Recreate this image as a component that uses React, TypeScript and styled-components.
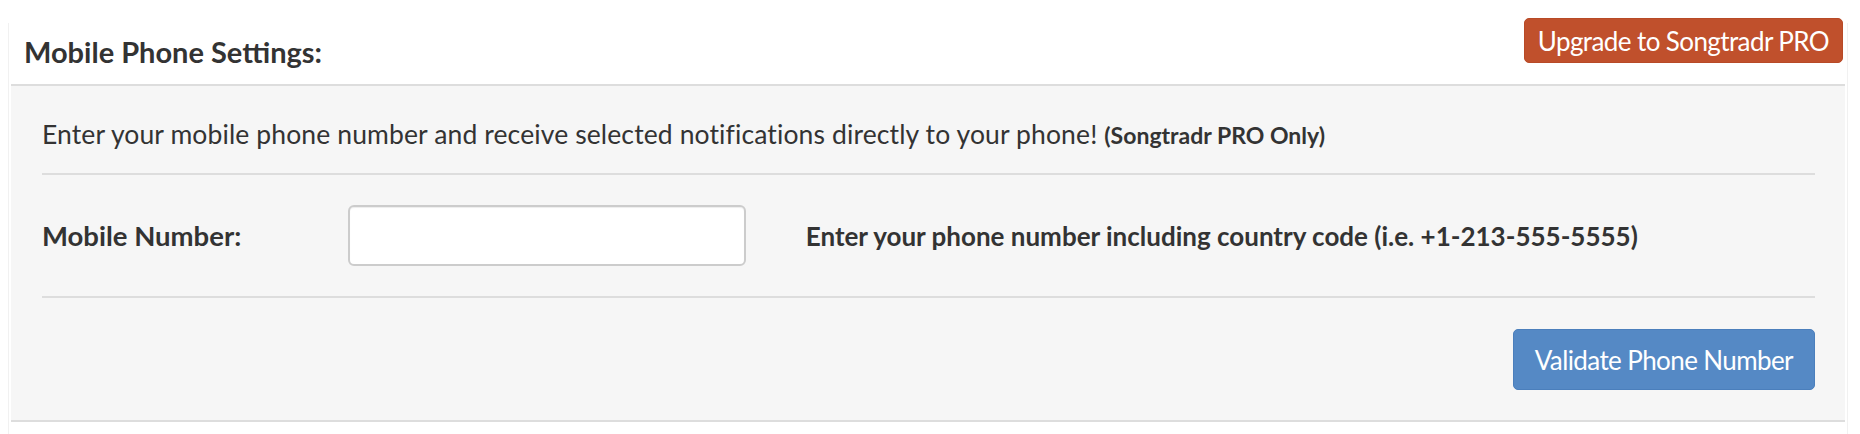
import React from "react";
import styled, { createGlobalStyle } from "styled-components";

const GlobalStyle = createGlobalStyle`
  * { box-sizing: border-box; }
  html, body { background: #ffffff; }
  body {
    margin: 8px;
    font-family: Lato, "Open Sans", sans-serif;
    color: #333333;
  }
`;

const Wrapper = styled.section`
  margin: 15px 4px 0 0;
  border-left: 1px solid #f1f1f1;
  border-right: 1px solid #f1f1f1;
  padding: 0 2px 12px;
`;

const Header = styled.header`
  display: flex;
  justify-content: space-between;
  align-items: flex-start;
  height: 61px;
  padding: 0 2px 0 13px;
`;

const Title = styled.h2`
  margin: 12px 0 0;
  font-size: 29px;
  line-height: 34px;
  font-weight: 700;
  letter-spacing: 0;
  color: #333333;
`;

const Button = styled.button<{ $variant: "upgrade" | "primary" }>`
  font-family: Lato, "Open Sans", sans-serif;
  color: #ffffff;
  border-radius: 5px;
  cursor: pointer;
  white-space: nowrap;
  ${({ $variant }) =>
    $variant === "upgrade"
      ? `
    margin-top: -5px;
    height: 45px;
    padding: 0 13px;
    font-size: 26px;
    letter-spacing: -0.6px;
    background: #c0502c;
    border: 1px solid #b84a27;
  `
      : `
    height: 61px;
    padding: 0 21px;
    font-size: 26px;
    letter-spacing: -0.6px;
    background: #5589c5;
    border: 1px solid #4b7fbc;
  `}
`;

const Body = styled.div`
  background: #f6f6f6;
  border-top: 2px solid #dddddd;
  border-bottom: 2px solid #dddddd;
  padding: 30px 30px 30px 31px;
`;

const Intro = styled.p`
  margin: 0;
  font-size: 26.5px;
  line-height: 36px;
  letter-spacing: 0.12px;
`;

const Note = styled.strong`
  font-size: 23px;
  font-weight: 700;
  letter-spacing: 0;
`;

const Divider = styled.hr<{ $top: number }>`
  margin: ${({ $top }) => $top}px 0 0;
  border: 0;
  border-top: 2px solid #dddddd;
`;

const FormRow = styled.div`
  display: grid;
  grid-template-columns: 16.6667% 25% 1fr;
  align-items: center;
  margin: 30px -30px 0;
`;

const Cell = styled.div`
  padding: 0 30px;
`;

const Label = styled.label`
  display: block;
  font-size: 27.5px;
  line-height: 36px;
  font-weight: 700;
  letter-spacing: 0;
`;

const Input = styled.input`
  display: block;
  width: 100%;
  height: 61px;
  border: 2px solid #cccccc;
  border-radius: 6px;
  background: #ffffff;
  box-shadow: inset 0 1px 1px rgba(0, 0, 0, 0.075);
  padding: 0 14px;
  font-size: 25px;
  font-family: Lato, "Open Sans", sans-serif;
`;

const Help = styled.span`
  display: block;
  font-size: 26px;
  line-height: 36px;
  font-weight: 700;
  letter-spacing: 0;
`;

const Actions = styled.div`
  display: flex;
  justify-content: flex-end;
  margin-top: 31px;
`;

export default function App() {
  return (
    <>
      <GlobalStyle />
      <Wrapper>
        <Header>
          <Title>Mobile Phone Settings:</Title>
          <Button $variant="upgrade">Upgrade to Songtradr PRO</Button>
        </Header>
        <Body>
          <Intro>
            Enter your mobile phone number and receive selected notifications directly to your phone!{" "}
            <Note>(Songtradr PRO Only)</Note>
          </Intro>
          <Divider $top={20} />
          <FormRow>
            <Cell>
              <Label htmlFor="mobile">Mobile Number:</Label>
            </Cell>
            <Cell>
              <Input id="mobile" type="tel" />
            </Cell>
            <Cell>
              <Help>Enter your phone number including country code (i.e. +1-213-555-5555)</Help>
            </Cell>
          </FormRow>
          <Divider $top={30} />
          <Actions>
            <Button $variant="primary">Validate Phone Number</Button>
          </Actions>
        </Body>
      </Wrapper>
    </>
  );
}
